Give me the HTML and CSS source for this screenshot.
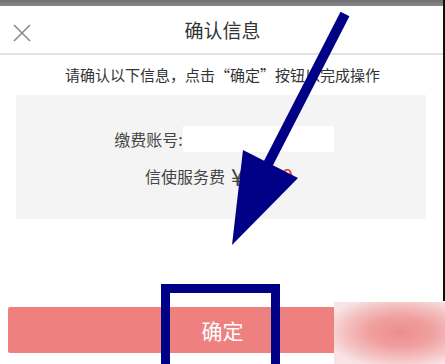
FILE: index.html
```html
<!DOCTYPE html>
<html lang="zh-CN">
<head>
    <meta charset="UTF-8">
    <meta name="viewport" content="width=device-width, initial-scale=1.0">
    <title>确认信息</title>
    <link rel="stylesheet" href="styles.css">
</head>
<body>
    <div class="page">
        <div class="status-bar"></div>
        <div class="header">
            <span class="close">
                <svg width="20" height="20" viewBox="0 0 20 20">
                    <path d="M2 2 L18 18 M18 2 L2 18" stroke="#8a8a8a" stroke-width="1.6" fill="none"/>
                </svg>
            </span>
            <h1 class="title">确认信息</h1>
        </div>
        <p class="hint">请确认以下信息，点击“确定”按钮以完成操作</p>
        <div class="info-box">
            <div class="row">
                <span class="label">缴费账号:</span>
                <input class="account" type="text">
            </div>
            <div class="row fee">
                <span class="label">信使服务费</span>
                <span class="yen">¥</span>
                <span class="amount">0.00</span>
            </div>
        </div>
        <div class="actions">
            <button class="confirm">确定</button>
        </div>

        <div class="watermark"></div>
        <div class="edge"></div>
        <svg class="annotation" width="445" height="364" viewBox="0 0 445 364">
            <line x1="345" y1="14" x2="268" y2="164" stroke="#000086" stroke-width="10"/>
            <polygon points="243,150 298,178 232,245" fill="#000086"/>
            <rect x="165.5" y="288.5" width="110" height="100" fill="none" stroke="#000086" stroke-width="9"/>
        </svg>
    </div>
</body>
</html>
```

FILE: styles.css
```css
body {
    margin: 0;
    font-family: "Noto Sans CJK SC", "Noto Sans", sans-serif;
    background: #fff;
    color: #333;
}
.page {
    position: relative;
    width: 445px;
    height: 364px;
    overflow: hidden;
}
.status-bar {
    height: 6px;
    background: linear-gradient(#6e6e6e, #8a8a8a);
}
.header {
    height: 47px;
    border-bottom: 2px solid #e2e2e2;
    display: flex;
    align-items: center;
    justify-content: center;
    position: relative;
}
.close {
    position: absolute;
    left: 12px;
    top: 17px;
    width: 20px;
    height: 20px;
}
.title {
    margin: 0;
    font-size: 19px;
    font-weight: normal;
    color: #333;
    line-height: 24px;
}
.hint {
    margin: 10px 0;
    height: 20px;
    line-height: 20px;
    font-size: 15px;
    text-align: center;
    color: #333;
}
.info-box {
    margin: 0 19px 0 16px;
    height: 124px;
    box-sizing: border-box;
    padding-top: 31px;
    background: #f4f4f4;
    display: flex;
    flex-direction: column;
    align-items: center;
    gap: 11px;
}
.row {
    display: flex;
    align-items: center;
    height: 26px;
    margin-left: 6px;
}
.row.fee {
    margin-left: -4px;
}
.label {
    font-size: 16px;
    color: #444;
}
.account {
    width: 151px;
    height: 26px;
    box-sizing: border-box;
    border: none;
    background: #fff;
    margin: 0;
    padding: 0;
}
.yen {
    font-size: 24px;
    line-height: 26px;
    color: #444;
    margin-left: 6px;
}
.amount {
    font-size: 21px;
    color: #e8392c;
    margin-left: 8px;
}
.actions {
    margin-top: 88px;
    padding: 0 8px;
}
.confirm {
    width: 100%;
    height: 46px;
    border: none;
    border-radius: 2px;
    background: #ee8180;
    color: #fff;
    font-family: inherit;
    font-size: 21px;
    padding: 0;
}
.watermark {
    position: absolute;
    left: 334px;
    top: 302px;
    width: 111px;
    height: 62px;
    background: radial-gradient(ellipse 70% 60% at 60% 48%, #ee8e8e 0%, #f09f9f 40%, #f4c4c4 75%, #f8e4e4 100%);
}
.edge {
    position: absolute;
    right: 0;
    top: 0;
    width: 2px;
    height: 301px;
    background: #111;
}
.annotation {
    position: absolute;
    left: 0;
    top: 0;
}
```
